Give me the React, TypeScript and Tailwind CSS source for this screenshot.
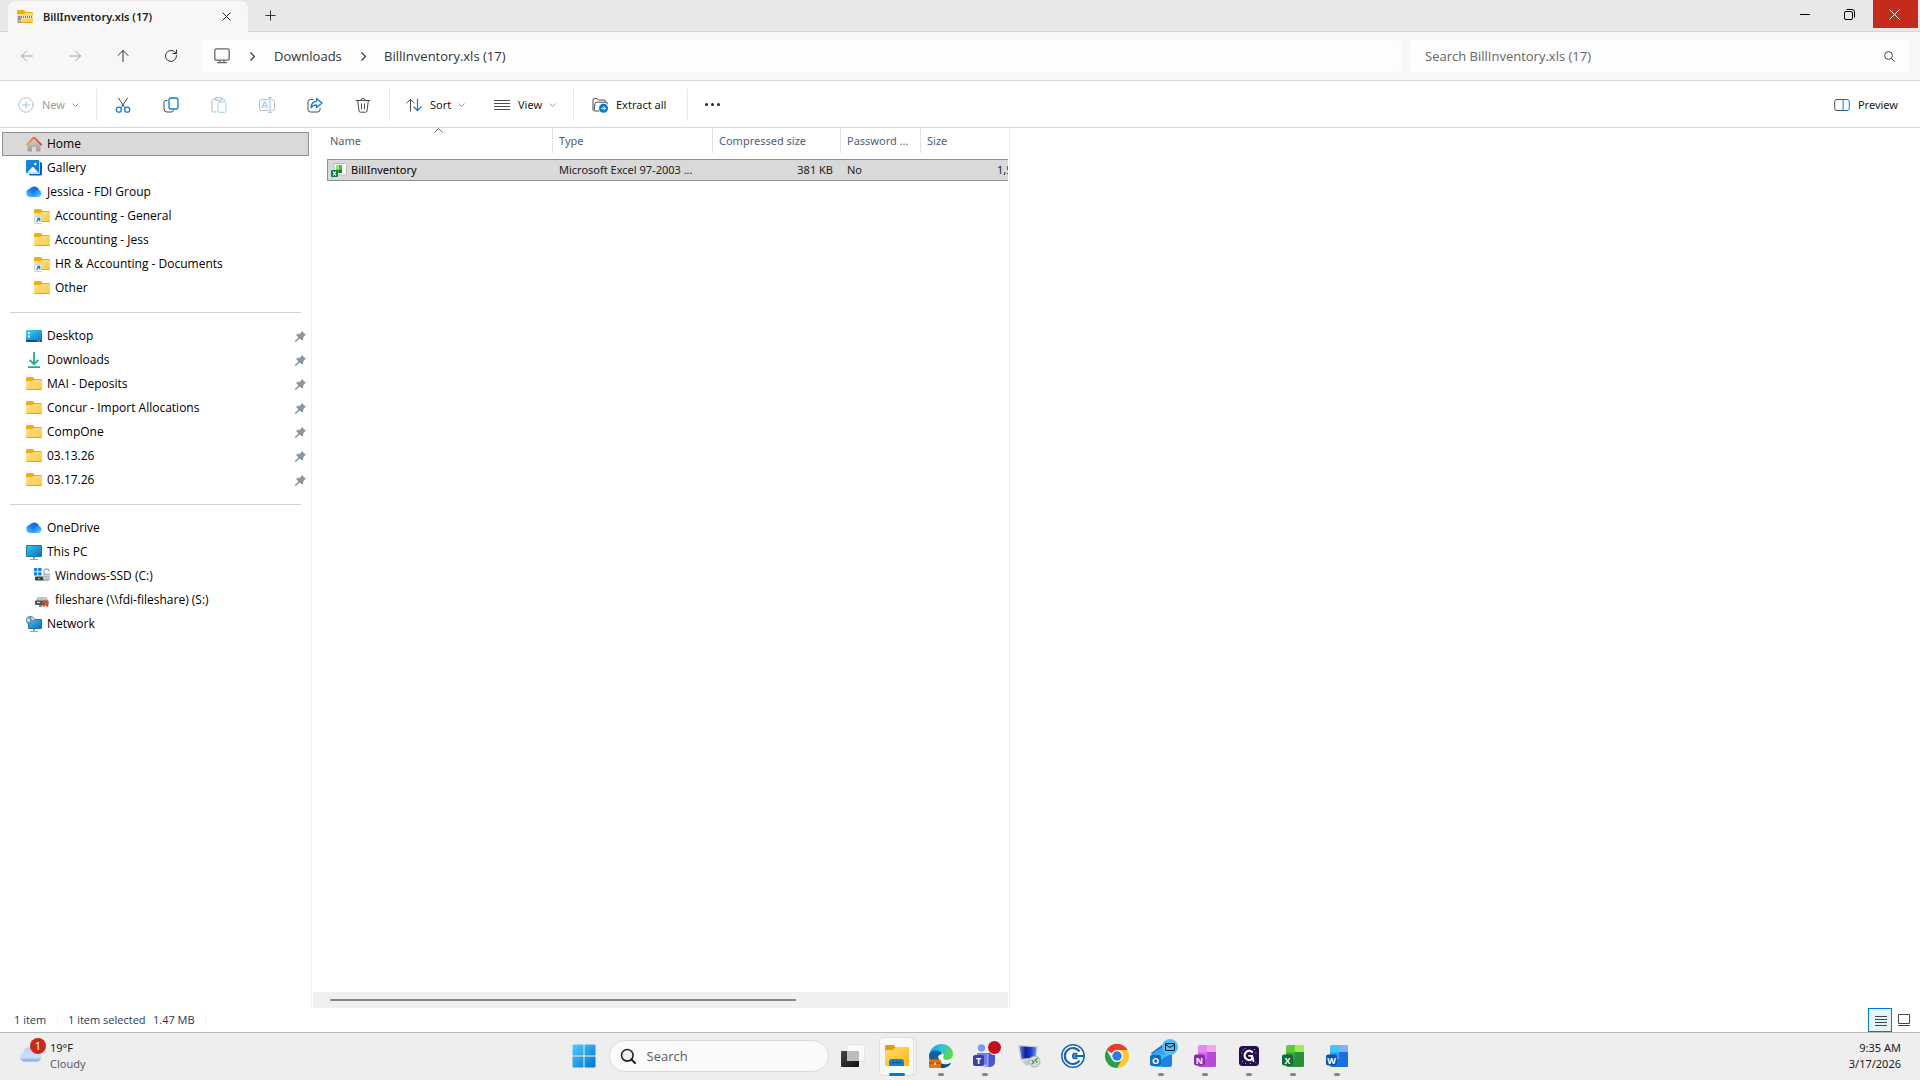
import type { ReactNode } from "react";

/* ---------- Sidebar and file icons (16 x 16) ---------- */

function Folder({ link = false, zip = false }: { link?: boolean; zip?: boolean }) {
  return (
    <svg className="size-4 shrink-0" viewBox="0 0 16 16" aria-hidden="true">
      <defs>
        <linearGradient id="folderFront" x1="0" y1="0" x2="1" y2="1">
          <stop offset="0" stopColor="#ffe59b" />
          <stop offset="1" stopColor="#fdc83a" />
        </linearGradient>
      </defs>
      <path d="M0 2.600C0 1.700.6 1 1.500 1h4.700c.5 0 .9.2 1.200.5L8.700 3H15a1 1 0 0 1 1 1v5H0z" fill="#f3ad0a" />
      <path d="M0 5h6.400c.5 0 .8-.2 1.100-.5L8.200 4H15a1 1 0 0 1 1 1v7.800c0 .7-.5 1.200-1.200 1.200H1.200C.5 14 0 13.500 0 12.800z" fill="url(#folderFront)" />
      <path d="M0 13h16a1.200 1.200 0 0 1-1.200 1H1.200A1.200 1.200 0 0 1 0 13z" fill="#e8a313" />
      {link && (
        <g>
          <rect x=".5" y="8.500" width="7" height="7" fill="#fff" stroke="#c9d3dc" />
          <path d="M2.300 13.800 5 11.100M3 10.500h2.700v2.700" stroke="#1a7fd0" strokeWidth="1.300" fill="none" />
        </g>
      )}
      {zip && (
        <g>
          <path d="M2 8h14" stroke="#e9e9e9" strokeWidth="2" />
          <path d="M2 8h14" stroke="#7d8287" strokeWidth="2" strokeDasharray="1 1" />
          <path d="M.8 7h3v5.500c0 .8-.6 1.500-1.500 1.500S.8 13.300.8 12.500z" fill="#8f959b" />
          <path d="M1.800 11h1v1.500h-1z" fill="#e9e9e9" />
        </g>
      )}
    </svg>
  );
}

function HomeIcon() {
  return (
    <svg className="size-4 shrink-0" viewBox="0 0 16 16" aria-hidden="true">
      <defs>
        <linearGradient id="wall" x1="0" y1="0" x2="0" y2="1">
          <stop offset="0" stopColor="#d6d6d6" />
          <stop offset="1" stopColor="#9c9c9c" />
        </linearGradient>
        <linearGradient id="roof" x1="0" y1="0" x2="1" y2="0">
          <stop offset="0" stopColor="#f59b3c" />
          <stop offset="1" stopColor="#d9481c" />
        </linearGradient>
      </defs>
      <path d="M8 2 1.500 8v6.500c0 .5.4 1 1 1H6V11h4v4.500h3.500c.6 0 1-.5 1-1V8z" fill="url(#wall)" />
      <path d="M.8 8.600 7.300 2a1 1 0 0 1 1.400 0l6.500 6.600" stroke="url(#roof)" strokeWidth="1.800" strokeLinecap="round" fill="none" />
    </svg>
  );
}

function GalleryIcon() {
  return (
    <svg className="size-4 shrink-0" viewBox="0 0 16 16" aria-hidden="true">
      <rect x="3" y="2" width="13" height="13.500" rx="1.500" fill="#0a5fb0" />
      <rect x="0" y="0" width="14" height="14" rx="1.500" fill="#fff" />
      <rect x="0" y="0" width="13.300" height="13.300" rx="1.300" fill="#1583d8" />
      <path d="M1 12.800 6.200 7.300c.4-.4.9-.4 1.300 0l5 5.500z" fill="#fff" />
      <circle cx="9.300" cy="4" r="1.200" fill="#fff" />
    </svg>
  );
}

function CloudIcon() {
  return (
    <svg className="size-4 shrink-0" viewBox="0 0 16 16" aria-hidden="true">
      <defs>
        <linearGradient id="cloudBack" x1="0" y1="1" x2="1" y2="0">
          <stop offset="0" stopColor="#5fd0fd" />
          <stop offset=".5" stopColor="#1b7cea" />
          <stop offset="1" stopColor="#0f5fdc" />
        </linearGradient>
        <linearGradient id="cloudFront" x1="0" y1="0" x2="1" y2="1">
          <stop offset="0" stopColor="#1560e8" />
          <stop offset=".5" stopColor="#2a9cf8" />
          <stop offset="1" stopColor="#5fd4fe" />
        </linearGradient>
      </defs>
      <path d="M4 13a4 4 0 0 1-.6-7.900A5.300 5.300 0 0 1 13 6l-6 7z" fill="url(#cloudBack)" />
      <path d="M4.500 13C9 12 8 6 12.200 5.700A3.700 3.700 0 0 1 12.300 13z" fill="url(#cloudFront)" />
    </svg>
  );
}

function DesktopIcon() {
  return (
    <svg className="size-4 shrink-0" viewBox="0 0 16 16" aria-hidden="true">
      <defs>
        <linearGradient id="desk" x1="0" y1="0" x2="1" y2="1">
          <stop offset="0" stopColor="#38d4ee" />
          <stop offset="1" stopColor="#0f6fc6" />
        </linearGradient>
      </defs>
      <rect x="0" y="2" width="16" height="12" rx="1" fill="url(#desk)" />
      <path d="M0 12h16v1a1 1 0 0 1-1 1H1a1 1 0 0 1-1-1z" fill="#0b4f96" />
      <path d="M2 4h2v2H2zM2 7.500h2v2H2z" fill="#fff" />
      <path d="M11 12.500h1v1h-1zM13 12.500h1v1h-1z" fill="#bfe3ff" />
    </svg>
  );
}

function DownloadIcon() {
  return (
    <svg className="size-4 shrink-0" viewBox="0 0 16 16" fill="none" stroke="#1fae93" strokeWidth="1.800" aria-hidden="true">
      <path d="M8 0v12M3.500 7.800 8 12.200l4.500-4.400M2 15.100h12" />
    </svg>
  );
}

function Monitor({ globe = false }: { globe?: boolean }) {
  return (
    <svg className="size-4 shrink-0" viewBox="0 0 16 16" aria-hidden="true">
      <defs>
        <linearGradient id="screen" x1="0" y1="0" x2="1" y2="1">
          <stop offset="0" stopColor="#34c8e8" />
          <stop offset="1" stopColor="#0f6cbd" />
        </linearGradient>
      </defs>
      <path d="M7 13h2v2h3v1H4v-1h3z" fill="#9aa5b1" />
      <rect x={globe ? 2 : 0} y={globe ? 3 : 1} width={globe ? 14 : 16} height={globe ? 10 : 12} rx="1" fill="#1478b8" />
      <rect x={globe ? 3 : 1} y={globe ? 4 : 2} width={globe ? 12 : 14} height={globe ? 8 : 10} fill="url(#screen)" />
      {globe && (
        <g>
          <circle cx="4.500" cy="4.500" r="4.500" fill="#5b92b5" />
          <path d="M1 3c2-2 4 0 3 2s-2 1-3 0M5 1c2 0 3 1 3 3-1 1-3-1-3-3" fill="#c8dde8" />
        </g>
      )}
    </svg>
  );
}

function DriveIcon() {
  return (
    <svg className="size-4 shrink-0" viewBox="0 0 16 16" aria-hidden="true">
      <path d="M0 0h3.300v3.300H0zM4.200 0h3.300v3.300H4.200zM0 4.200h3.300v3.300H0zM4.200 4.200h3.300v3.300H4.200z" fill="#0a84dc" />
      <rect x="1" y="8.500" width="12" height="4" rx=".8" fill="#3d4144" />
      <rect x="4" y="10" width="2" height="1.200" fill="#3fd65a" />
      <path d="M10 6V3.500a2.500 2.500 0 0 1 5 0" stroke="#a9b1b8" strokeWidth="1.300" fill="none" />
      <path d="M9 5.500h7v5a3.500 2.800 0 0 1-7 0z" fill="#aebac4" />
      <path d="M9 7.500h7M9 9.500h7" stroke="#d9e0e6" strokeWidth=".7" />
    </svg>
  );
}

function ShareDriveIcon() {
  return (
    <svg className="size-4 shrink-0" viewBox="0 0 16 16" aria-hidden="true">
      <path d="M3.500 5h9l2 4H1.500z" fill="#c3c3c3" />
      <rect x="1" y="8.500" width="13.500" height="4.500" rx=".8" fill="#55585a" />
      <path d="M3 10.500h3" stroke="#e3e3e3" />
      <path d="M5 13h3v2H5z" fill="#8a8a8a" />
      <path d="m9 9.500 5 5M14 9.500l-5 5" stroke="#e5531c" strokeWidth="2" />
    </svg>
  );
}

function XlsIcon() {
  return (
    <svg className="size-4 shrink-0" viewBox="0 0 16 16" aria-hidden="true">
      <path d="M3 1.500h11.500a1 1 0 0 1 1 1V12a1 1 0 0 1-1 1H3z" fill="#fafafa" stroke="#b9b9b9" />
      <rect x="5" y="3" width="3" height="4.500" fill="#9be26b" />
      <rect x="8" y="3" width="3" height="4.500" fill="#4fbf3f" />
      <rect x="8" y="7.500" width="3" height="3.500" fill="#1c7a35" />
      <rect x="5" y="7.500" width="3" height="3.500" fill="#2f9e44" />
      <rect x="0" y="8" width="7" height="7" rx="1" fill="#107c41" />
      <path d="m2 9.500 3 4M5 9.500l-3 4" stroke="#fff" strokeWidth="1.200" />
    </svg>
  );
}

function Pin() {
  return (
    <svg className="size-[11px] shrink-0" viewBox="0 0 11 11" aria-hidden="true">
      <path d="M7 0 11 4 9.800 4.600 8.300 6.200 8 9 6.800 9.600 4.600 7.400 1 11 0 11 0 10 3.400 6.300 1.200 4.200 2 3 4.800 2.800 6.400 1.200z" fill="#8b98a3" />
    </svg>
  );
}

/* ---------- Toolbar glyphs ---------- */

function Glyph({ children, color = "#4a4a4a" }: { children: ReactNode; color?: string }) {
  return (
    <svg className="size-4 shrink-0" viewBox="0 0 16 16" fill="none" stroke={color} strokeLinecap="round" strokeLinejoin="round" aria-hidden="true">
      {children}
    </svg>
  );
}

function ChevronDown() {
  return (
    <svg className="h-1 w-[7px] shrink-0" viewBox="0 0 7 4" fill="none" stroke="#9a9a9a" aria-hidden="true">
      <path d="m.5.5 3 3 3-3" />
    </svg>
  );
}

function ChevronRight() {
  return (
    <svg className="h-[9px] w-[5px] shrink-0" viewBox="0 0 5 9" fill="none" stroke="#333" strokeWidth="1.200" aria-hidden="true">
      <path d="m.5.5 4 4-4 4" />
    </svg>
  );
}

function Divider() {
  return <div className="h-8 w-px shrink-0 bg-[#e8e8e8]" />;
}

function IconButton({ label, disabled = false, children }: { label: string; disabled?: boolean; children: ReactNode }) {
  return (
    <button type="button" aria-label={label} disabled={disabled} className="flex h-8 w-12 shrink-0 items-center justify-center">
      {children}
    </button>
  );
}

/* ---------- Sidebar ---------- */

type Item = { name: string; icon: ReactNode; nested?: boolean; pinned?: boolean; active?: boolean };

const groups: Item[][] = [
  [
    { name: "Home", icon: <HomeIcon />, active: true },
    { name: "Gallery", icon: <GalleryIcon /> },
    { name: "Jessica - FDI Group", icon: <CloudIcon /> },
    { name: "Accounting - General", icon: <Folder link />, nested: true },
    { name: "Accounting - Jess", icon: <Folder />, nested: true },
    { name: "HR & Accounting - Documents", icon: <Folder link />, nested: true },
    { name: "Other", icon: <Folder />, nested: true },
  ],
  [
    { name: "Desktop", icon: <DesktopIcon />, pinned: true },
    { name: "Downloads", icon: <DownloadIcon />, pinned: true },
    { name: "MAI - Deposits", icon: <Folder />, pinned: true },
    { name: "Concur - Import Allocations", icon: <Folder />, pinned: true },
    { name: "CompOne", icon: <Folder />, pinned: true },
    { name: "03.13.26", icon: <Folder />, pinned: true },
    { name: "03.17.26", icon: <Folder />, pinned: true },
  ],
  [
    { name: "OneDrive", icon: <CloudIcon /> },
    { name: "This PC", icon: <Monitor /> },
    { name: "Windows-SSD (C:)", icon: <DriveIcon />, nested: true },
    { name: "fileshare (\\\\fdi-fileshare) (S:)", icon: <ShareDriveIcon />, nested: true },
    { name: "Network", icon: <Monitor globe /> },
  ],
];

function Sidebar() {
  return (
    <nav aria-label="Folders" className="w-[312px] shrink-0 border-r border-[#f0f0f0] pt-1 pr-0.5 pl-0.5 font-['Open_Sans',sans-serif]">
      {groups.map((items, i) => (
        <div key={i}>
          {i > 0 && (
            <div className="flex h-6 items-center pr-2 pl-2">
              <hr className="w-full border-[#d2d2d2]" />
            </div>
          )}
          <ul>
            {items.map((item) => (
              <li key={item.name}>
                <a
                  href="#"
                  className={`flex h-6 items-center gap-[5px] border pr-0.5 text-[12px] text-black ${item.nested ? "pl-[31px]" : "pl-[23px]"} ${
                    item.active ? "border-[#8f8f8f] bg-[#d9d9d9]" : "border-transparent"
                  }`}
                >
                  {item.icon}
                  <span className="flex-1 whitespace-nowrap">{item.name}</span>
                  {item.pinned && <Pin />}
                </a>
              </li>
            ))}
          </ul>
        </div>
      ))}
    </nav>
  );
}

/* ---------- File list ---------- */

function FileList() {
  return (
    <main className="flex w-[695px] shrink-0 flex-col">
      <div className="relative flex-1 overflow-hidden">
        <svg className="absolute top-0 left-[121px] h-[5px] w-[9px]" viewBox="0 0 9 5" fill="none" stroke="#666" aria-hidden="true">
          <path d="m.5 4.500 4-4 4 4" />
        </svg>
        <table className="ml-3.5 w-[760px] table-fixed border-separate border-spacing-0 text-[11px] whitespace-nowrap">
          <colgroup>
            <col className="w-[226px]" />
            <col className="w-40" />
            <col className="w-32" />
            <col className="w-20" />
            <col />
          </colgroup>
          <thead>
            <tr className="h-[25px] text-left text-[#4c607a]">
              <th className="border-r border-[#e2e2e2] pt-0.5 pl-[3px] font-normal">Name</th>
              <th className="border-r border-[#e2e2e2] pt-0.5 pl-1.5 font-normal">Type</th>
              <th className="border-r border-[#e2e2e2] pt-0.5 pl-1.5 font-normal">Compressed size</th>
              <th className="border-r border-[#e2e2e2] pt-0.5 pl-1.5 font-normal">Password ...</th>
              <th className="pt-0.5 pl-1.5 font-normal">Size</th>
            </tr>
          </thead>
          <tbody>
            <tr aria-hidden="true" className="h-1.5">
              <td colSpan={5} />
            </tr>
            <tr className="h-[22px] text-[#222]">
              <td className="border-y border-l border-[#8f8f8f] bg-[#d9d9d9] pl-[3px]">
                <div className="flex items-center gap-1 text-black">
                  <XlsIcon />
                  BillInventory
                </div>
              </td>
              <td className="border-y border-[#8f8f8f] bg-[#d9d9d9] pl-1.5">Microsoft Excel 97-2003 ...</td>
              <td className="border-y border-[#8f8f8f] bg-[#d9d9d9] pr-2 text-right">381 KB</td>
              <td className="border-y border-[#8f8f8f] bg-[#d9d9d9] pl-1.5">No</td>
              <td className="border-y border-[#8f8f8f] bg-[#d9d9d9] pl-[76px]">1,508 KB</td>
            </tr>
          </tbody>
        </table>
      </div>
      <div className="flex h-4 items-center bg-[#f0f0f0] pl-[17px]">
        <div className="h-0.5 w-[466px] rounded-full bg-[#858585]" />
      </div>
    </main>
  );
}

/* ---------- Taskbar ---------- */

function AppSlot({ label, running = false, active = false, children }: { label: string; running?: boolean; active?: boolean; children: ReactNode }) {
  return (
    <button type="button" aria-label={label} className="relative flex h-[47px] w-11 shrink-0 items-center justify-center pb-0.5">
      {active && (
        <>
          <span className="absolute top-1 left-3 h-[39px] w-[30px] rounded border border-[#dedede] bg-[#f3f3f3]" />
          <span className="absolute top-1 left-1 h-[39px] w-[35px] rounded border border-[#dedede] bg-[#f9f9f9]" />
        </>
      )}
      <span className="relative">{children}</span>
      {running && !active && <span className="absolute bottom-1 h-[3px] w-1.5 rounded-full bg-[#868686]" />}
      {active && <span className="absolute bottom-1 h-[3px] w-4 rounded-full bg-[#0078d4]" />}
    </button>
  );
}

function OfficeIcon({ letter, colors }: { letter: string; colors: [string, string, string, string, string] }) {
  return (
    <svg className="size-6" viewBox="0 0 24 24" aria-hidden="true">
      <rect x="5" y="1" width="18" height="22" rx="2" fill={colors[0]} />
      <path d="M14 1h7a2 2 0 0 1 2 2v5h-9z" fill={colors[1]} />
      <path d="M5 8.500h9V16H5z" fill={colors[2]} />
      <path d="M14 8h9v13a2 2 0 0 1-2 2h-7z" fill={colors[3]} />
      <path d="M5 15h18v6a2 2 0 0 1-2 2H7a2 2 0 0 1-2-2z" fill={colors[3]} />
      <rect x="1" y="10.500" width="11" height="11" rx="2" fill={colors[4]} />
      <text x="6.500" y="19.500" textAnchor="middle" fontSize="9" fontWeight="700" fill="#fff" fontFamily="Open Sans, sans-serif">
        {letter}
      </text>
    </svg>
  );
}

function StartIcon() {
  return (
    <svg className="size-6" viewBox="0 0 24 24" aria-hidden="true">
      <defs>
        <linearGradient id="start" x1="0" y1="0" x2="24" y2="24" gradientUnits="userSpaceOnUse">
          <stop offset="0" stopColor="#4fd0fb" />
          <stop offset="1" stopColor="#0070d0" />
        </linearGradient>
      </defs>
      <path d="M1.500.5h10v11H.5v-10a1 1 0 0 1 1-1zM12.500.5h10a1 1 0 0 1 1 1v10h-11zM.5 12.500h11v11h-10a1 1 0 0 1-1-1zM12.500 12.500h11v10a1 1 0 0 1-1 1h-10z" fill="url(#start)" />
    </svg>
  );
}

function TaskViewIcon() {
  return (
    <svg className="size-6" viewBox="0 0 24 24" aria-hidden="true">
      <defs>
        <linearGradient id="taskFront" x1="0" y1="0" x2="1" y2="1">
          <stop offset="0" stopColor="#444" />
          <stop offset="1" stopColor="#111" />
        </linearGradient>
      </defs>
      <rect x="6" y="1" width="17.500" height="16" rx="1" fill="#fbfbfb" stroke="#dcdcdc" strokeWidth=".6" />
      <rect x="0" y="7" width="18" height="16" rx="1" fill="url(#taskFront)" />
      <rect x="6" y="7" width="12" height="10" fill="#bdbdbd" />
    </svg>
  );
}

function ExplorerIcon() {
  return (
    <svg className="size-6" viewBox="0 0 24 24" aria-hidden="true">
      <defs>
        <linearGradient id="explorer" x1="0" y1="0" x2="1" y2="1">
          <stop offset="0" stopColor="#ffdb74" />
          <stop offset="1" stopColor="#fdb813" />
        </linearGradient>
      </defs>
      <path d="M0 2.500C0 1.700.7 1 1.500 1h7l2 2v4H0z" fill="#e09d0c" />
      <path d="M0 6h8l2.500-3H23a1 1 0 0 1 1 1v17a1 1 0 0 1-1 1H1a1 1 0 0 1-1-1z" fill="url(#explorer)" />
      <path d="M4 22v-4.500C4 16.100 5.100 15 6.500 15h10c1.400 0 2.500 1.100 2.500 2.500V22z" fill="#1680d0" />
      <path d="M7.500 18.500h8" stroke="#0a4f96" strokeWidth="1.600" strokeLinecap="round" />
    </svg>
  );
}

function EdgeIcon() {
  return (
    <svg className="size-6" viewBox="0 0 24 24" aria-hidden="true">
      <defs>
        <linearGradient id="edgeTop" x1="0" y1="0" x2="1" y2=".4">
          <stop offset="0" stopColor="#1b8fd8" />
          <stop offset=".5" stopColor="#2fc0e0" />
          <stop offset="1" stopColor="#5cd94e" />
        </linearGradient>
      </defs>
      <path d="M0 12C.5 5 6 0 12.500 0 19 0 24 4.500 24 10c0 4-3 6-6.500 6-3 0-4-1.300-3.400-2.400C16 10.500 13.500 8 10 8c-5 0-8 3-10 4z" fill="url(#edgeTop)" />
      <path d="M0 12c0-4 4-6 8-5.500 3 .3 5 2 5 4-3-.5-4.500 2-3.500 5.500S15 21.500 19 20c1.500-.5 2.500-1 3-.5C20 22.500 16 24 12 24 5 24 0 18.500 0 12z" fill="#0c5fae" />
      <path d="M9.500 13.500C9 17 12 21 17 20.500c2.500-.3 4-1.500 4.800-1C19.500 22.500 16 24 12.500 24 8 23 7 17 9.500 13.500z" fill="#134a8e" />
      <path d="M13 10.500c-2.500-.3-3.600 1.200-3.300 3.500.8 3 4 4.500 6.500 4 2.500-.3 5-1.500 6.300-3.500-1.500 1.200-3.200 1.600-5 1.500-3 0-4-1.300-3.400-2.400.7-1.100-.1-2.400-1.100-3.100z" fill="#fff" />
      <rect x="0" y="15.500" width="12" height="8.500" rx="1" fill="#d9791a" />
      <path d="M3.500 15.500V14h5v1.500M0 19h12" stroke="#8b430c" strokeWidth="1.200" fill="none" />
      <rect x="5" y="18.500" width="2" height="2.500" fill="#ffd76b" />
    </svg>
  );
}

function TeamsIcon() {
  return (
    <svg className="h-6 w-7" viewBox="0 0 28 24" aria-hidden="true">
      <circle cx="10.500" cy="4" r="3.700" fill="#7e9bf2" />
      <path d="M15 9h6.500A2.500 2.500 0 0 1 24 11.500V18a5 5 0 0 1-5 5h-4z" fill="#4c56c4" />
      <path d="M6 9h9a2.500 2.500 0 0 1 2.500 2.500V17A6 6 0 0 1 6 17z" fill="#6f7cf0" />
      <path d="M17.500 11.500V23H11a6 6 0 0 0 5-6v-8a2 2 0 0 1 1.500 2.500z" fill="#8fa3f8" />
      <rect x="2" y="11" width="11" height="11" rx="2" fill="#3b3fa8" />
      <text x="7.500" y="20" textAnchor="middle" fontSize="9" fontWeight="700" fill="#fff" fontFamily="Open Sans, sans-serif">T</text>
    </svg>
  );
}

function RemoteIcon() {
  return (
    <svg className="size-6" viewBox="0 0 24 24" aria-hidden="true">
      <defs>
        <linearGradient id="remote" x1="0" y1="0" x2="1" y2="0">
          <stop offset="0" stopColor="#5f86ee" />
          <stop offset=".35" stopColor="#0c1f9a" />
          <stop offset=".7" stopColor="#1c45d8" />
          <stop offset="1" stopColor="#6f9af2" />
        </linearGradient>
      </defs>
      <path d="m5 18 6-3 4 3-5 4z" fill="#c4c8ce" />
      <path d="M1 1 21 2 19.500 15 3.500 17z" fill="#cfd4db" />
      <path d="M2.500 2.300 19.500 3.200 18.300 13.500 4.700 14.800z" fill="url(#remote)" />
      <circle cx="17.500" cy="17.500" r="5.500" fill="#dcdedd" stroke="#9b9f9c" strokeWidth=".8" />
      <path d="m14.500 16 2.500 2.200-2.500 2M20.500 14.300 18 16.300l2.500 2.200" stroke="#3d9a45" strokeWidth="1.200" fill="none" />
    </svg>
  );
}

function CIcon() {
  return (
    <svg className="size-6" viewBox="0 0 24 24" fill="none" stroke="#1565b0" aria-hidden="true">
      <circle cx="12" cy="12" r="11.500" fill="#fff" stroke="none" />
      <circle cx="12" cy="12" r="11.200" strokeWidth="1.500" />
      <path d="M18.500 7.500A8 8 0 1 0 18.500 16.500" strokeWidth="2.200" />
      <path d="M16.500 9.800h-3.500a2.800 2.800 0 0 0 0 4.400h3.500M13.500 12H23" strokeWidth="2" />
    </svg>
  );
}

function ChromeIcon() {
  return (
    <svg className="size-6" viewBox="0 0 24 24" aria-hidden="true">
      <path d="M12 12 1.600 6A12 12 0 0 1 22.400 6z" fill="#ea3d2f" />
      <path d="M12 12V6h10.400A12 12 0 0 1 12 24z" fill="#fcc934" />
      <path d="M12 24A12 12 0 0 1 1.600 6l5.200 9a6 6 0 0 0 10.400 0z" fill="#25a04b" />
      <path d="M1.600 6A12 12 0 0 1 22.400 6H12L6.800 9z" fill="#ea3d2f" />
      <circle cx="12" cy="12" r="6" fill="#fff" />
      <circle cx="12" cy="12" r="4.700" fill="#2b78e8" />
    </svg>
  );
}

function OutlookIcon() {
  return (
    <svg className="size-6" viewBox="0 0 24 24" aria-hidden="true">
      <path d="m2 9 11-8 10 6v6L9 17z" fill="#1f6fd0" />
      <path d="m2 10 12-7 5 3-13 9z" fill="#3d9ff0" />
      <path d="M2 12 23 8v12a3 3 0 0 1-3 3H7a3 3 0 0 1-3-3z" fill="#35bdf8" />
      <path d="m10 17 13-8v11a3 3 0 0 1-3 3h-7z" fill="#1b83e2" />
      <rect x="1" y="11" width="11" height="11" rx="2" fill="#0f6cbd" />
      <text x="6.500" y="20" textAnchor="middle" fontSize="9" fontWeight="700" fill="#fff" fontFamily="Open Sans, sans-serif">O</text>
    </svg>
  );
}

function QIcon() {
  return (
    <svg className="size-6" viewBox="0 0 24 24" aria-hidden="true">
      <rect x="2" y="2" width="20" height="20" rx="3.500" fill="#24104f" />
      <path d="M15 7.800A4.600 4.600 0 1 0 15 15.200V12.500" stroke="#fff" strokeWidth="2.200" strokeLinecap="round" fill="none" />
      <path d="M12 11.800h3.200l1.300 5.400" stroke="#fff" strokeWidth="1.800" strokeLinecap="round" fill="none" />
      <path d="M5.500 6h1M7.500 4.500h.8M17 5.500h1M18.500 9h.8M4.500 9h.8M5 17.500h1M8 19.300h1M13 19.500h1M18.500 18.500h.8" stroke="#c9b8f0" />
    </svg>
  );
}

function Taskbar() {
  return (
    <footer className="grid h-12 shrink-0 grid-cols-[1fr_auto_1fr] border-t border-[#b8b8b8] bg-[#eee] text-[11px]">
      <div className="flex items-start pl-[19px]">
        <button type="button" className="flex items-start gap-[7px] pt-[7px] text-left leading-4">
          <span className="relative mt-[5px] block">
            <svg className="h-[17px] w-6" viewBox="0 0 24 17" aria-hidden="true">
              <defs>
                <linearGradient id="weather" x1="0" y1="0" x2="0" y2="1">
                  <stop offset="0" stopColor="#b9cdf3" />
                  <stop offset=".7" stopColor="#cfe0f8" />
                  <stop offset="1" stopColor="#7b9fe6" />
                </linearGradient>
              </defs>
              <path d="M4.500 16.500a4.500 4.500 0 0 1-.3-8.600A7 7 0 0 1 17.500 6 5.500 5.500 0 0 1 19 16.500z" fill="url(#weather)" />
            </svg>
            <span className="absolute -top-[7px] left-[11px] flex size-4 items-center justify-center rounded-full bg-[#c42b1c] text-[11px] text-white">1</span>
          </span>
          <span className="block">
            <span className="block text-[#1a1a1a]">19°F</span>
            <span className="block text-[#5c5c5c]">Cloudy</span>
          </span>
        </button>
      </div>
      <div className="flex">
        <AppSlot label="Start"><StartIcon /></AppSlot>
        <label className="mt-[7px] mr-0.5 ml-[3px] flex h-8 w-[220px] items-center gap-[11px] rounded-full border border-[#dadada] bg-[#fafafa] pl-2.5">
          <svg className="size-4 shrink-0" viewBox="0 0 16 16" fill="none" stroke="#222" aria-hidden="true">
            <circle cx="7.300" cy="7.300" r="5.800" strokeWidth="1.600" fill="#eef1f4" />
            <path d="m11.500 11.500 3.500 3.500" strokeWidth="2" strokeLinecap="round" />
          </svg>
          <input type="search" aria-label="Search" placeholder="Search" className="w-full bg-transparent pt-px font-['Open_Sans',sans-serif] text-[13px] outline-none placeholder:text-[#5c5c5c]" />
        </label>
        <AppSlot label="Task view"><TaskViewIcon /></AppSlot>
        <AppSlot label="File Explorer" active><ExplorerIcon /></AppSlot>
        <AppSlot label="Edge" running><EdgeIcon /></AppSlot>
        <AppSlot label="Teams" running>
          <TeamsIcon />
          <span className="absolute -top-1 left-4 size-[15px] rounded-full border border-white bg-[#c50f1f]" />
        </AppSlot>
        <AppSlot label="Remote Desktop"><RemoteIcon /></AppSlot>
        <AppSlot label="CompOne"><CIcon /></AppSlot>
        <AppSlot label="Chrome"><ChromeIcon /></AppSlot>
        <AppSlot label="Outlook" running>
          <OutlookIcon />
          <span className="absolute -top-[5px] left-[13px] flex size-4 items-center justify-center rounded-full bg-[#50c0f5]">
            <svg className="h-2 w-2.5" viewBox="0 0 10 8" fill="none" stroke="#111" aria-hidden="true">
              <rect x=".5" y=".5" width="9" height="7" rx=".5" />
              <path d="m.8 1.500 4.200 3 4.200-3" />
            </svg>
          </span>
        </AppSlot>
        <AppSlot label="OneNote" running><OfficeIcon letter="N" colors={["#e886f5", "#f5a5e8", "#d06be8", "#b84ad8", "#8a2bb0"]} /></AppSlot>
        <AppSlot label="Quick Assistant" running><QIcon /></AppSlot>
        <AppSlot label="Excel" running><OfficeIcon letter="X" colors={["#5fc93f", "#a2e85c", "#36a53c", "#2a8f36", "#0f6b37"]} /></AppSlot>
        <AppSlot label="Word" running><OfficeIcon letter="W" colors={["#3fc4fb", "#7fb2fb", "#2f9cf5", "#1b6fe0", "#1450b0"]} /></AppSlot>
      </div>
      <div className="flex justify-end pt-[7px] pr-[19px] text-right leading-4 text-[#1a1a1a]">
        <button type="button" className="block self-start text-right">
          <span className="block">9:35 AM</span>
          <span className="block">3/17/2026</span>
        </button>
      </div>
    </footer>
  );
}

/* ---------- Window ---------- */

function TitleBar() {
  return (
    <header className="flex h-8 shrink-0 items-end border-b border-[#d6d6d6] bg-[#e8e8e8]">
      <div className="-mb-px ml-2 flex h-[31px] w-60 shrink-0 items-center rounded-t-lg bg-[#f7f7f7] pr-[14px] pl-[9px]">
        <Folder zip />
        <span className="flex-1 pt-px pl-2.5 text-[11px] font-semibold text-[#1c1c1c]">BillInventory.xls (17)</span>
        <button type="button" aria-label="Close tab" className="flex size-4 items-center justify-center">
          <svg className="size-[9px]" viewBox="0 0 9 9" stroke="#222" aria-hidden="true"><path d="m.5.5 8 8M8.500.5l-8 8" /></svg>
        </button>
      </div>
      <button type="button" aria-label="New tab" className="ml-[14px] flex h-[31px] w-4 items-center justify-center">
        <svg className="size-[11px]" viewBox="0 0 11 11" stroke="#333" aria-hidden="true"><path d="M5.500.5v10M.5 5.500h10" /></svg>
      </button>
      <div className="ml-auto flex self-start pr-0.5">
        <button type="button" aria-label="Minimize" className="flex h-7 w-[45px] items-center justify-center pr-0.5">
          <span className="h-px w-2.5 bg-black" />
        </button>
        <button type="button" aria-label="Restore" className="flex h-7 w-[45px] items-center justify-center pr-0.5">
          <svg className="size-[11px]" viewBox="0 0 11 11" fill="none" stroke="#000" aria-hidden="true">
            <rect x=".5" y="2.500" width="8" height="8" rx="1.500" />
            <path d="M2.500.5H8A2.500 2.500 0 0 1 10.500 3v5.500" />
          </svg>
        </button>
        <button type="button" aria-label="Close" className="flex h-7 w-[45px] items-center justify-center bg-[#c42b1c] pr-0.5">
          <svg className="size-[11px]" viewBox="0 0 11 11" stroke="#fff" aria-hidden="true"><path d="m.5.5 10 10M10.500.5l-10 10" /></svg>
        </button>
      </div>
    </header>
  );
}

function AddressBar() {
  return (
    <div className="flex h-[49px] shrink-0 items-center border-b border-[#d6d6d6] bg-[#f7f7f7] pr-[11px] pl-[3px] font-['Open_Sans',sans-serif]">
      <IconButton label="Back" disabled><Glyph color="#a6a6a6"><path d="M2.500 8h11M7.500 3 2.500 8l5 5" /></Glyph></IconButton>
      <IconButton label="Forward" disabled><Glyph color="#a6a6a6"><path d="M2.500 8h11M8.500 3l5 5-5 5" /></Glyph></IconButton>
      <IconButton label="Up"><Glyph color="#333"><path d="M8 2.500v11M3 7.500l5-5 5 5" /></Glyph></IconButton>
      <IconButton label="Refresh"><Glyph color="#333"><path d="M13.500 7.500a5.500 5.500 0 1 1-2-3.800l1.700 1.500M13.500 2v3.500H10" /></Glyph></IconButton>
      <nav aria-label="Address" className="ml-1.5 flex h-8 flex-1 items-center rounded bg-[#fdfdfd] pl-[13px] text-[13px] text-[#333]">
        <Glyph color="#666"><path d="M2.500.8h11A1.700 1.700 0 0 1 15.200 2.500v8a1.700 1.700 0 0 1-1.700 1.700h-11A1.700 1.700 0 0 1 .8 10.500v-8A1.700 1.700 0 0 1 2.500.8zM6 12.500v2M10 12.500v2M3.500 14.700h9" strokeWidth="1.300" /></Glyph>
        <span className="flex w-11 justify-center"><ChevronRight /></span>
        <a href="#" className="w-[69px] pt-0.5 whitespace-nowrap">Downloads</a>
        <span className="flex w-[41px] justify-center"><ChevronRight /></span>
        <a href="#" className="pt-0.5 whitespace-nowrap">BillInventory.xls (17)</a>
      </nav>
      <label className="ml-2 flex h-8 w-[499px] shrink-0 items-center rounded bg-[#fdfdfd] pr-3.5 pl-[15px]">
        <input type="search" aria-label="Search BillInventory.xls (17)" placeholder="Search BillInventory.xls (17)" className="flex-1 bg-transparent pt-0.5 text-[13px] outline-none placeholder:text-[#666]" />
        <svg className="size-[11px]" viewBox="0 0 11 11" fill="none" stroke="#444" aria-hidden="true">
          <circle cx="4.500" cy="4.500" r="3.900" />
          <path d="m7.300 7.300 3.400 3.400" />
        </svg>
      </label>
    </div>
  );
}

function Toolbar() {
  return (
    <div role="toolbar" aria-label="Commands" className="flex h-[47px] shrink-0 items-center border-b border-[#d6d6d6] bg-white pt-px text-[11px] whitespace-nowrap text-[#1a1a1a]">
      <button type="button" disabled className="flex h-8 w-24 shrink-0 items-center pl-[18px] text-[#9a9a9a]">
        <Glyph color="#bdbdbd"><circle cx="8" cy="8" r="7.200" /><path d="M8 4.800v6.400M4.800 8h6.400" stroke="#8cc3ea" /></Glyph>
        <span className="w-[38px] pt-0.5 pl-2 text-left">New</span>
        <ChevronDown />
      </button>
      <Divider />
      <div className="mx-0.5 flex">
        <IconButton label="Cut">
          <Glyph><path d="m3.500 1 6.300 9.500M12.500 1 6.200 10.500" /><g stroke="#0f7bd4" strokeWidth="1.300"><circle cx="3.800" cy="12.700" r="2.500" /><circle cx="12.200" cy="12.700" r="2.500" /></g></Glyph>
        </IconButton>
        <IconButton label="Copy">
          <Glyph><path d="M4 3.500H3a2 2 0 0 0-2 2V12a3 3 0 0 0 3 3h4.500a2 2 0 0 0 2-1.500" /><rect x="6" y="1" width="9" height="11" rx="2" stroke="#0f7bd4" strokeWidth="1.300" /></Glyph>
        </IconButton>
        <IconButton label="Paste" disabled>
          <Glyph color="#b9b9b9"><path d="M5 2H2.500A1.500 1.500 0 0 0 1 3.500v10A1.500 1.500 0 0 0 2.500 15H5M11 2h1a1.500 1.500 0 0 1 1.500 1.500M5 .7h5.500v2.500H5z" /><rect x="7" y="5" width="8" height="10.300" rx="1.500" stroke="#9ccdee" /></Glyph>
        </IconButton>
        <IconButton label="Rename" disabled>
          <Glyph color="#b9b9b9"><path d="M9 2.500H2.500a2 2 0 0 0-2 2v7a2 2 0 0 0 2 2H9M13 2.500h.5a2 2 0 0 1 2 2v7a2 2 0 0 1-2 2H13" /><g stroke="#8cc3ea"><path d="M11 .7v14.600M9.500.7h3M9.500 15.300h3M3 11l2.700-6.500L8.400 11M4 9h3.500" /></g></Glyph>
        </IconButton>
        <IconButton label="Share">
          <Glyph><path d="M6 2.500H3.500A2.500 2.500 0 0 0 1 5v7.500A2.500 2.500 0 0 0 3.500 15h7a2.500 2.500 0 0 0 2.500-2.500V11" /><path d="M9.500 1.500 15 6l-5.500 4.500V8C7 8 5.300 8.800 4 10.500 4.300 7 6.300 4.500 9.500 4.200z" stroke="#0f7bd4" strokeWidth="1.300" fill="#e5f3fd" /></Glyph>
        </IconButton>
        <IconButton label="Delete">
          <Glyph><path d="M1.300 3.500h13.400M6 3.300a2 2 0 0 1 4 0M2.700 3.800 4 14a1.500 1.500 0 0 0 1.500 1.200h5A1.500 1.500 0 0 0 12 14l1.300-10.200M6.500 7v4.800M9.500 7v4.800" /></Glyph>
        </IconButton>
      </div>
      <Divider />
      <button type="button" className="flex h-8 w-[88px] shrink-0 items-center pl-4">
        <Glyph><path d="M4.500 14V2.500M.8 6l3.700-3.500L8.200 6" /><path d="M11.500 2v11.500M8 10l3.500 3.500L15.200 10" stroke="#0f7bd4" strokeWidth="1.200" /></Glyph>
        <span className="w-9 pt-0.5 pl-2 text-left">Sort</span>
        <ChevronDown />
      </button>
      <button type="button" className="flex h-8 w-[95px] shrink-0 items-center pl-4">
        <Glyph><path d="M.5 3.500h15M.5 6.500h15M.5 9.500h15M.5 12.500h15" /></Glyph>
        <span className="w-[39px] pt-0.5 pl-2 text-left">View</span>
        <ChevronDown />
      </button>
      <Divider />
      <button type="button" className="flex h-8 w-[113px] shrink-0 items-center gap-2 pl-[18px]">
        <Glyph><path d="M1 12V3a1.500 1.500 0 0 1 1.500-1.500H5L6.500 3H12a1.500 1.500 0 0 1 1.500 1.500M7 14H2.500L1 12.500M2 13.500l1-7a1.500 1.500 0 0 1 1.500-1.300H14A1.500 1.500 0 0 1 15.300 7" /><circle cx="11.500" cy="11.300" r="4.500" fill="#0078d4" stroke="none" /><path d="M9.500 11.300h4M11.700 9.500l1.800 1.800-1.800 1.800" stroke="#fff" /></Glyph>
        <span className="pt-0.5">Extract all</span>
      </button>
      <Divider />
      <button type="button" aria-label="See more" className="flex h-8 w-12 shrink-0 items-center justify-center gap-[3px]">
        <span className="size-[3px] rounded-full bg-[#222]" />
        <span className="size-[3px] rounded-full bg-[#222]" />
        <span className="size-[3px] rounded-full bg-[#222]" />
      </button>
      <button type="button" className="mr-[22px] ml-auto flex h-8 items-center gap-2">
        <Glyph><path d="M9.500 2.500H3A2.300 2.300 0 0 0 .7 4.800v6.400A2.300 2.300 0 0 0 3 13.500h6.500" /><path d="M9.500 2.500H13a2.300 2.300 0 0 1 2.300 2.300v6.400a2.300 2.300 0 0 1-2.300 2.300H9.500z" stroke="#0f7bd4" /></Glyph>
        <span className="pt-0.5">Preview</span>
      </button>
    </div>
  );
}

function StatusBar() {
  return (
    <div className="flex h-6 shrink-0 items-center bg-white pl-[14px] font-['Open_Sans',sans-serif] text-[11px] whitespace-nowrap text-[#1e395b]">
      <span className="w-[43px]">1 item</span>
      <span className="h-3 w-px bg-[#f3f3f3]" />
      <span className="w-[95px] pl-2.5">1 item selected</span>
      <span className="w-[52px]">1.47 MB</span>
      <span className="h-3 w-px bg-[#f3f3f3]" />
      <div className="mr-[9px] ml-auto flex items-center gap-1.5">
        <button type="button" aria-label="Details view" className="flex size-6 items-center justify-center border border-[#0078d7] bg-[#e5f3fb]">
          <svg className="mt-px ml-0.5 h-2.5 w-3" viewBox="0 0 12 10" stroke="#444" aria-hidden="true"><path d="M0 .5h12M0 3.500h12M0 6.500h12M0 9.500h12" /></svg>
        </button>
        <button type="button" aria-label="Large icons view" className="flex h-6 items-center">
          <svg className="h-3 w-[13px]" viewBox="0 0 13 12" fill="none" stroke="#444" aria-hidden="true"><path d="M.5 .5h11v9H.5zM0 11.500h12" /></svg>
        </button>
      </div>
    </div>
  );
}

export default function App() {
  return (
    <div className="flex h-screen flex-col overflow-hidden bg-white font-['Noto_Sans',sans-serif]">
      <TitleBar />
      <AddressBar />
      <Toolbar />
      <div className="flex min-h-0 flex-1">
        <Sidebar />
        <div className="w-px shrink-0" />
        <FileList />
        <section aria-label="Preview pane" className="ml-px flex-1 border-l border-[#f0f0f0]" />
      </div>
      <StatusBar />
      <Taskbar />
    </div>
  );
}
